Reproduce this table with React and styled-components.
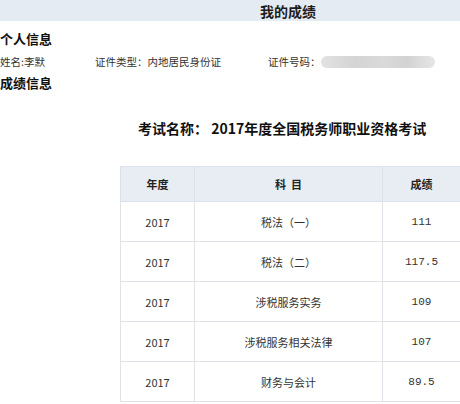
import React from 'react'
import styled, { createGlobalStyle } from 'styled-components'

const GlobalStyle = createGlobalStyle`
  body {
    margin: 0;
    overflow: hidden;
    background: #fff;
    font-family: "Noto Sans CJK SC", "Noto Sans", sans-serif;
    color: #222;
  }
`

const Page = styled.div`
  width: 460px;
  height: 404px;
  overflow: hidden;
`

const TitleBar = styled.div`
  height: 21px;
  background: #e5ebf2;
  padding-left: 116px;
  display: flex;
  justify-content: center;
  align-items: center;
  font-size: 14px;
  font-weight: 700;
  color: #1e1e1e;
`

const SectionTitle = styled.h3`
  margin: ${p => p.$top || 0}px 0 0 0;
  height: 16px;
  line-height: 16px;
  font-size: 13px;
  font-weight: 700;
  color: #111;
`

const InfoRow = styled.div`
  display: grid;
  grid-template-columns: 95px 173px auto;
  align-items: center;
  margin-top: 7px;
  height: 14px;
  font-size: 10.5px;
  color: #333;
`

const Field = styled.span`
  display: flex;
  align-items: center;
  white-space: nowrap;
`

const Blurred = styled.span`
  display: inline-block;
  width: 114px;
  height: 12px;
  border-radius: 6px;
  background: linear-gradient(90deg, #e2e2e2 0%, #d4d4d4 30%, #dadada 55%, #d2d2d2 75%, #e6e6e6 100%);
`

const ExamName = styled.div`
  margin: 28px 0 0 138px;
  height: 18px;
  line-height: 18px;
  font-size: 14px;
  font-weight: 700;
  color: #111;
  white-space: nowrap;
`

const Table = styled.table`
  margin: 29px 0 0 120px;
  width: 340px;
  border-collapse: collapse;
  table-layout: fixed;
  font-size: 11px;
  color: #333;
`

const HeadCell = styled.th`
  height: 34px;
  padding: 0;
  background: #e8edf3;
  border: 1px solid #dbe1e8;
  font-size: 11px;
  font-weight: 700;
  color: #222;
  text-align: center;
`

const Cell = styled.td`
  height: 39px;
  padding: 0;
  border: 1px solid #dfe3e8;
  text-align: center;
  font-family: ${p => p.$num ? '"Liberation Mono", monospace' : 'inherit'};
`

const scores = [
  { year: '2017', subject: '税法（一）', score: '111' },
  { year: '2017', subject: '税法（二）', score: '117.5' },
  { year: '2017', subject: '涉税服务实务', score: '109' },
  { year: '2017', subject: '涉税服务相关法律', score: '107' },
  { year: '2017', subject: '财务与会计', score: '89.5' },
]

export default function App() {
  return (
    <Page>
      <GlobalStyle />
      <TitleBar>我的成绩</TitleBar>
      <SectionTitle $top={10}>个人信息</SectionTitle>
      <InfoRow>
        <Field>姓名:李默</Field>
        <Field>证件类型：内地居民身份证</Field>
        <Field>证件号码：<Blurred /></Field>
      </InfoRow>
      <SectionTitle $top={7}>成绩信息</SectionTitle>
      <ExamName>考试名称： 2017年度全国税务师职业资格考试</ExamName>
      <Table>
        <colgroup>
          <col style={{ width: 74 }} />
          <col style={{ width: 188 }} />
          <col style={{ width: 78 }} />
        </colgroup>
        <thead>
          <tr>
            <HeadCell>年度</HeadCell>
            <HeadCell>科&nbsp;&nbsp;目</HeadCell>
            <HeadCell>成绩</HeadCell>
          </tr>
        </thead>
        <tbody>
          {scores.map((r, i) => (
            <tr key={i}>
              <Cell>{r.year}</Cell>
              <Cell>{r.subject}</Cell>
              <Cell $num>{r.score}</Cell>
            </tr>
          ))}
        </tbody>
      </Table>
    </Page>
  )
}
